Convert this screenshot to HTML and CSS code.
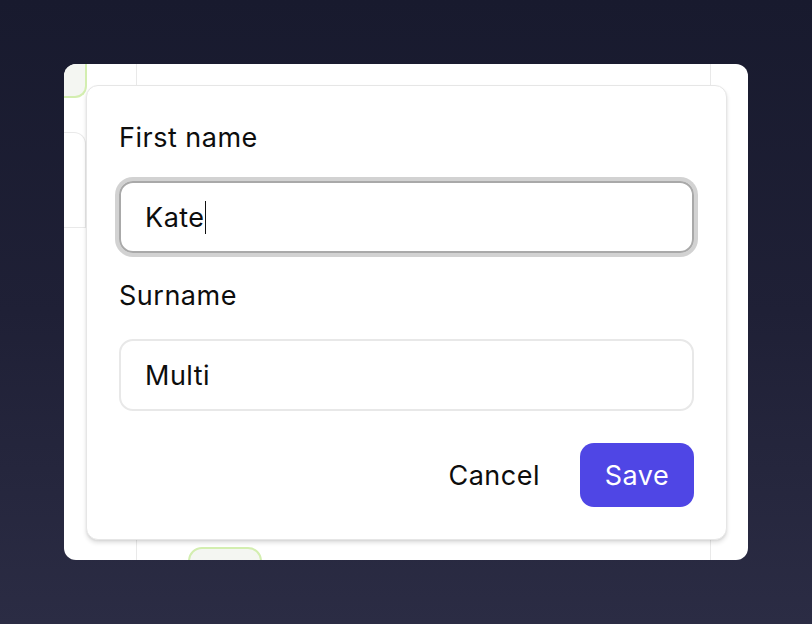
FILE: index.html
```html
<!DOCTYPE html>
<html>
<head>
<meta charset="utf-8">
<link rel="stylesheet" href="styles.css">
</head>
<body>
<div class="stage">
  <div class="card">
    <div class="board">
      <div class="col col-a">
        <div class="tag-top"></div>
        <div class="box-left"></div>
      </div>
      <div class="col col-b">
        <div class="pill"></div>
      </div>
      <div class="col col-c"></div>
    </div>
    <form class="dialog">
      <label class="label">First name</label>
      <div class="input focused"><span class="val">Kate</span><span class="caret"></span></div>
      <label class="label label-2">Surname</label>
      <div class="input"><span class="val">Multi</span></div>
      <div class="actions">
        <span class="btn-cancel">Cancel</span>
        <span class="btn-save">Save</span>
      </div>
    </form>
  </div>
</div>
</body>
</html>
```
FILE: styles.css
```css
html, body {
  margin: 0;
  padding: 0;
}
body {
  width: 812px;
  height: 624px;
  overflow: hidden;
  font-family: Inter, "Noto Sans", sans-serif;
  background: linear-gradient(180deg, #181a2e 0%, #1f2036 50%, #2b2c44 100%);
}
.stage {
  padding: 64px;
  box-sizing: border-box;
  width: 812px;
  height: 624px;
}
.card {
  position: relative;
  width: 684px;
  height: 496px;
  background: #fff;
  border-radius: 12px;
  overflow: hidden;
}
.board {
  display: flex;
  height: 100%;
}
.col {
  position: relative;
  height: 100%;
  box-sizing: border-box;
}
.col-a {
  width: 73px;
  border-right: 1px solid #e9e9e9;
}
.col-b {
  width: 574px;
  border-right: 1px solid #e9e9e9;
}
.col-c {
  flex: 1;
}
.tag-top {
  width: 23px;
  height: 34px;
  background: #f4f6f2;
  border-right: 2px solid #d3eeb0;
  border-bottom: 2px solid #d3eeb0;
  border-bottom-right-radius: 12px;
  box-sizing: border-box;
}
.box-left {
  position: absolute;
  left: 0;
  top: 68px;
  width: 22px;
  height: 96px;
  border-top: 1px solid #e9e9e9;
  border-right: 1px solid #e9e9e9;
  border-bottom: 1px solid #e9e9e9;
  border-top-right-radius: 12px;
  box-sizing: border-box;
}
.pill {
  position: absolute;
  left: 51px;
  top: 483px;
  width: 74px;
  height: 30px;
  background: #f4f6f2;
  border: 2px solid #d3eeb0;
  border-radius: 14px;
  box-sizing: border-box;
}
.dialog {
  position: absolute;
  left: 22px;
  top: 21px;
  width: 641px;
  height: 455px;
  box-sizing: border-box;
  background: #fff;
  border: 1px solid #e6e6e6;
  border-radius: 12px;
  box-shadow: 0 3px 4px rgba(0, 0, 0, 0.12), 0 1px 2px rgba(0, 0, 0, 0.06);
  padding: 32px;
  display: flex;
  flex-direction: column;
  margin: 0;
  letter-spacing: 0.5px;
}
.label {
  font-size: 27px;
  line-height: 40px;
  color: #0d0d0d;
  height: 40px;
}
.label-2 {
  margin-top: 23px;
}
.input {
  margin-top: 23px;
  height: 72px;
  box-sizing: border-box;
  border: 2px solid #e8e8e8;
  border-radius: 14px;
  display: flex;
  align-items: center;
  padding-left: 24px;
  font-size: 27px;
  color: #0d0d0d;
}
.input.focused {
  border: 2px solid #a9a9a9;
  box-shadow: 0 0 0 4px #d2d2d2;
}
.caret {
  display: inline-block;
  width: 1.5px;
  height: 33px;
  background: #111;
}
.actions {
  margin-top: 32px;
  display: flex;
  justify-content: flex-end;
  align-items: center;
  gap: 40px;
}
.btn-cancel {
  font-size: 27px;
  color: #0d0d0d;
}
.btn-save {
  width: 114px;
  height: 64px;
  box-sizing: border-box;
  background: #4f46e5;
  color: #fff;
  border-radius: 14px;
  font-size: 27px;
  display: flex;
  align-items: center;
  justify-content: center;
}
```
